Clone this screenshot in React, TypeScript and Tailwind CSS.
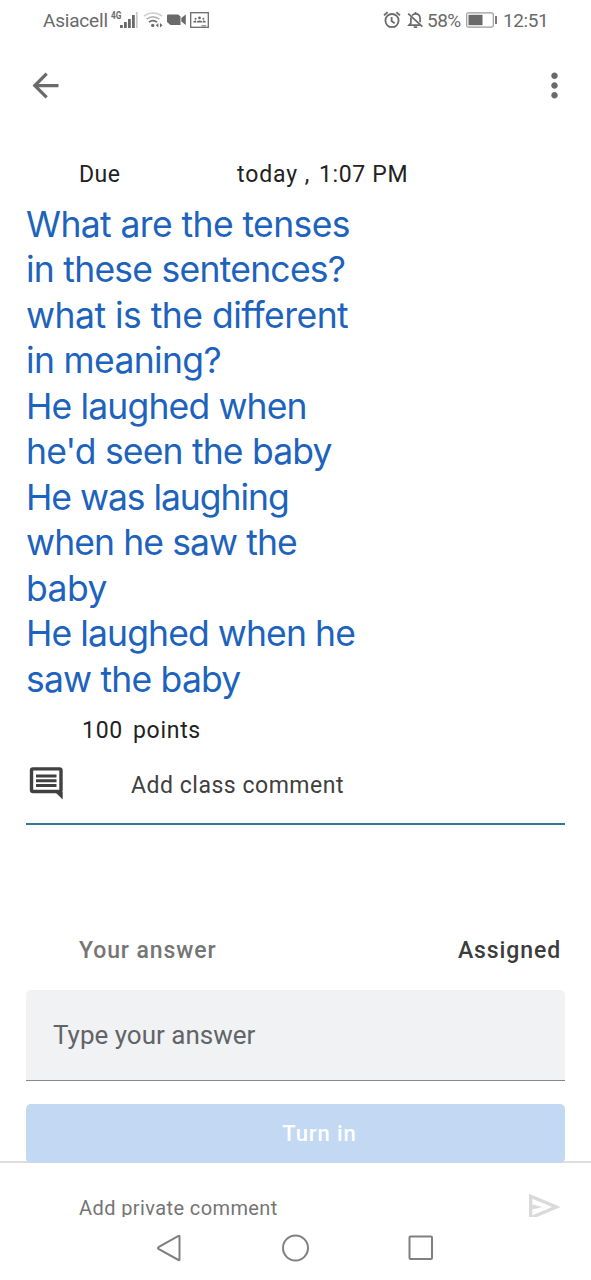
import React from "react";
import { MdArrowBack, MdMoreVert } from "react-icons/md";

const questionLines = [
  { text: "What are the tenses", spacing: "tracking-[-0.6px]" },
  { text: "in these sentences?", spacing: "tracking-[-0.75px]" },
  { text: "what is the different", spacing: "tracking-[-0.52px]" },
  { text: "in meaning?", spacing: "tracking-[-0.65px]" },
  { text: "He laughed when", spacing: "tracking-[-0.85px]" },
  { text: "he'd seen the baby", spacing: "tracking-[-0.82px]" },
  { text: "He was laughing", spacing: "tracking-[-1.05px]" },
  { text: "when he saw the", spacing: "tracking-[-0.9px]" },
  { text: "baby", spacing: "tracking-[-0.55px]" },
  { text: "He laughed when he", spacing: "tracking-[-0.9px]" },
  { text: "saw the baby", spacing: "tracking-[-0.8px]" },
];

const SignalIcon = () => (
  <svg width="18" height="18" viewBox="0 0 18 18" fill="#6a6a6a">
    <rect x="0" y="14" width="2.8" height="3" />
    <rect x="4" y="11" width="2.8" height="6" />
    <rect x="8" y="8" width="2.8" height="9" />
    <rect x="12" y="4" width="2.8" height="13" />
    <rect x="15.9" y="1" width="1.8" height="16" fill="#c9c9c9" />
  </svg>
);

const WifiIcon = () => (
  <svg width="21" height="18" viewBox="0 0 21 18" fill="none" strokeWidth="1.7">
    <path d="M1 5.2C6 .9 14 .9 19 5.2" stroke="#cfcfcf" />
    <path d="M3.6 8.2c3.8-3.2 9-3.2 12.8 0" stroke="#b5b5b5" />
    <path d="M6 11.2c2.4-2 5.6-2 8 0" stroke="#6a6a6a" />
    <circle cx="9.7" cy="14.4" r="1.7" fill="#6a6a6a" />
    <path d="M15.3 12v4.6L12.8 14.3zM17 12v4.6l2.5-2.3z" fill="#6a6a6a" />
  </svg>
);

const CameraIcon = () => (
  <svg width="19" height="12" viewBox="0 0 19 12" fill="#6a6a6a">
    <path d="M1 .5h10.3l2.2 2v8.5H3.5L0 8V1.5Q0 .5 1 .5z" />
    <path d="M14.3 4L18.8.5v10.5L14.3 7.5z" />
  </svg>
);

const ClassroomIcon = () => (
  <svg width="19" height="16" viewBox="0 0 19 16" fill="#6a6a6a">
    <rect x=".7" y=".7" width="17.6" height="14.6" fill="none" stroke="#6a6a6a" strokeWidth="1.3" />
    <circle cx="9.5" cy="5.9" r="1.4" />
    <circle cx="5.6" cy="6.8" r="1" />
    <circle cx="13.4" cy="6.8" r="1" />
    <path d="M6.6 10.6V9.6q2.9-2.2 5.8 0v1zM3.3 10.6v-1q1.3-1.4 2.7-1v2zM15.7 10.6v-1q-1.3-1.4-2.7-1v2z" />
    <path d="M11.5 13.3h4.5v1h-4.5z" />
  </svg>
);

const AlarmIcon = () => (
  <svg width="18" height="18" viewBox="0 0 18 18" fill="none" stroke="#6a6a6a" strokeWidth="1.8">
    <circle cx="9" cy="9.6" r="6.6" />
    <path d="M8.6 6v4l3 2.2M1 4.4L4.6 1.3M17 4.4l-3.6-3.1" />
  </svg>
);

const MutedBellIcon = () => (
  <svg width="17" height="18" viewBox="0 0 17 18" fill="none" stroke="#6a6a6a" strokeWidth="1.7">
    <path d="M5 4.6C6 3.3 7.2 2.8 8.5 2.8c3 0 4.6 2.1 4.6 5v3.4M3.9 6.6v5.6L2 14.2h10.8" />
    <path d="M8.5 1v1.8M1.2 2.6l14.2 13M6.8 16.2h3.4" />
  </svg>
);

const BatteryIcon = () => (
  <svg width="32" height="16" viewBox="0 0 32 16">
    <rect x=".7" y=".9" width="26.6" height="14.2" rx="1.5" fill="none" stroke="#9a9a9a" strokeWidth="1.2" />
    <rect x="2.5" y="2.8" width="14" height="10.4" fill="#6a6a6a" />
    <rect x="29" y="4" width="2" height="8" fill="#7a7a7a" />
  </svg>
);

const CommentIcon = () => (
  <svg width="39" height="39" viewBox="0 0 39 39" fill="none" stroke="#404040" strokeWidth="3.4">
    <rect x="5.5" y="4.9" width="29.5" height="22.6" rx="1.5" />
    <path d="M10 12h20.5M10 16.8h20.5M10 21.6h20.5" strokeWidth="3" />
    <path d="M29 28h7.7v7.6z" fill="#404040" stroke="none" />
  </svg>
);

const StatusBar = () => (
  <div className="flex h-10 items-center justify-between pr-[42px] pl-[43px] text-[19px] text-[#6a6a6a]">
    <div className="flex items-center">
      <span className="w-[68px] pt-[2px] whitespace-nowrap tracking-[-0.2px]">Asiacell</span>
      <span className="mb-[9px] w-[9px] origin-left scale-x-75 text-[11px] leading-none font-bold whitespace-nowrap">4G</span>
      <SignalIcon />
      <div className="ml-[5px]">
        <WifiIcon />
      </div>
      <div className="ml-[3px]">
        <CameraIcon />
      </div>
      <div className="ml-1">
        <ClassroomIcon />
      </div>
    </div>
    <div className="flex items-center">
      <AlarmIcon />
      <div className="ml-[6px]">
        <MutedBellIcon />
      </div>
      <span className="ml-[3px] w-[39px] pt-[2px] whitespace-nowrap tracking-[-0.5px]">58%</span>
      <BatteryIcon />
      <span className="ml-[5px] w-[46px] pt-[2px] whitespace-nowrap tracking-[-0.4px]">12:51</span>
    </div>
  </div>
);

const TopBar = () => (
  <div className="flex h-[91px] items-center justify-between pr-[17px] pl-[26px] text-[#6a6a6a]">
    <MdArrowBack size={39} />
    <MdMoreVert size={39} />
  </div>
);

const Assignment = () => (
  <div className="px-[26px]">
    <div className="mt-[30px] flex h-7 items-center text-[23px] text-[#222]">
      <span className="ml-[53px] w-[158px] whitespace-nowrap tracking-[0.5px]">Due</span>
      <span className="w-[82px] whitespace-nowrap tracking-[0.9px]">today ,</span>
      <span className="whitespace-nowrap tracking-[0.65px]">1:07 PM</span>
    </div>
    <h1 className="mt-[13px] font-['Inter',sans-serif] text-[35.5px] leading-[45.45px] text-[#1d63bd]">
      {questionLines.map((line) => (
        <span key={line.text} className={`block w-fit whitespace-nowrap ${line.spacing}`}>
          {line.text}
        </span>
      ))}
    </h1>
    <div className="mt-[15px] ml-[56px] flex h-7 items-center text-[23px] text-[#222]">
      <span className="w-[51px] tracking-[0.7px]">100</span>
      <span className="tracking-[0.7px]">points</span>
    </div>
    <div className="flex h-20 items-center border-b-2 border-[#2f7a93] text-[#404040]">
      <CommentIcon />
      <span className="mt-[5px] ml-[66px] text-[23px] whitespace-nowrap tracking-[0.52px]">Add class comment</span>
    </div>
  </div>
);

const Answer = () => (
  <div className="px-[26px] pt-[110px]">
    <div className="flex h-8 items-center justify-between pr-1 pl-[53px] text-[23px] font-medium">
      <span className="whitespace-nowrap text-[#757575] tracking-[0.9px]">Your answer</span>
      <span className="whitespace-nowrap text-[#3c3c3c] tracking-[0.9px]">Assigned</span>
    </div>
    <div className="mt-[23px] flex h-[91px] items-center rounded-t-[5px] border-b-[1.5px] border-[#85898a] bg-[#f1f2f4] pl-[27px] text-[26px] text-[#616468]">
      <span className="pt-[2px] whitespace-nowrap">Type your answer</span>
    </div>
    <button className="relative z-10 mt-[23px] flex h-[59px] w-full items-center justify-center rounded-[5px] bg-[#c3d8f2] pl-12 text-[22px] font-medium text-white tracking-[0.9px]">
      Turn in
    </button>
  </div>
);

const PrivateComment = () => (
  <div className="-mt-[2px] flex h-[56px] items-start justify-between overflow-hidden border-t-2 border-[#dedede] pr-[27px] pl-[79px]">
    <span className="mt-[31px] text-[20px] leading-7 whitespace-nowrap text-[#757575] tracking-[0.4px]">
      Add private comment
    </span>
    <svg className="mt-6 shrink-0" width="40" height="40" viewBox="0 0 24 24" fill="#dadada">
      <path d="M3 20V4l19 8-19 8Zm2-3 11.85-5L5 7v3.5l6 1.5-6 1.5V17Z" />
    </svg>
  </div>
);

const NavBar = () => (
  <div className="flex h-[63px] items-center justify-between pr-[157px] pl-[156px]">
    <svg width="26" height="30" viewBox="0 0 26 30" fill="none" stroke="#808080" strokeWidth="2">
      <path d="M23.5 3.5v23q0 1-1 .5L2.5 16q-1-1 0-1.8L22.5 3q1-.5 1 .5z" />
    </svg>
    <svg width="30" height="30" viewBox="0 0 30 30" fill="none" stroke="#808080" strokeWidth="2">
      <circle cx="15.5" cy="15" r="12.5" />
    </svg>
    <svg width="26" height="26" viewBox="0 0 26 26" fill="none" stroke="#808080" strokeWidth="2">
      <rect x="1.5" y="1.5" width="22.5" height="22.5" rx="1" />
    </svg>
  </div>
);

const App = () => {
  return (
    <div className="h-[1280px] w-[591px] overflow-hidden bg-white font-['Roboto',sans-serif]">
      <StatusBar />
      <TopBar />
      <Assignment />
      <Answer />
      <PrivateComment />
      <NavBar />
    </div>
  );
};

export default App;
